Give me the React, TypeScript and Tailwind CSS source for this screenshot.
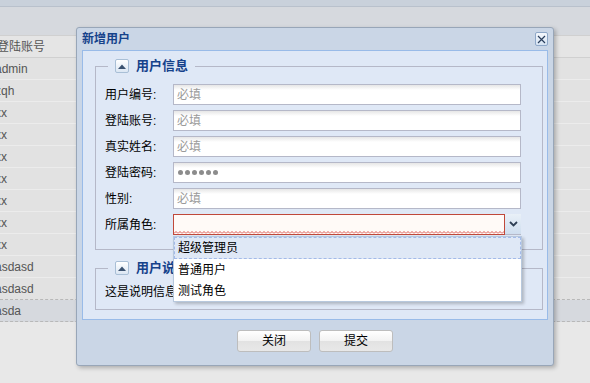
const rows = ["admin", "zqh", "xx", "xx", "xx", "xx", "xx", "xx", "xx", "asdasd", "asdasd", "asda"];

function CollapseTool() {
  return (
    <span className="flex h-[14px] w-[14px] items-center justify-center rounded-[2px] border border-[#a9bfd6] bg-[linear-gradient(to_bottom,#ffffff,#dbe6f3)]">
      <svg width="8" height="5" viewBox="0 0 8 5">
        <path d="M0 5 L4 0.5 L8 5 Z" fill="#3b5270" />
      </svg>
    </span>
  );
}

function Field({ label, children }: { label: string; children: React.ReactNode }) {
  return (
    <div className="flex h-[21px] items-center">
      <span className="w-[68px] text-[12px] leading-[16px] text-black">{label}</span>
      {children}
    </div>
  );
}

function TextInput({ placeholder }: { placeholder: string }) {
  return (
    <div className="flex h-[21px] w-[348px] items-center border border-[#b5b8c8] bg-[linear-gradient(to_bottom,#e6e6e6,#ffffff_5px)] pl-[3px] text-[12px] text-[#9a9a9a]">
      {placeholder}
    </div>
  );
}

export default function App() {
  return (
    <div className="relative h-[383px] w-[590px] overflow-hidden bg-[#e8e8e8] font-['Liberation_Sans','Noto_Sans_CJK_SC',sans-serif]">
      {/* masked grid behind the window */}
      <div className="flex flex-col">
        <div className="h-[7px] border-b border-[#b9c1cc] bg-[#c9d1db]" />
        <div className="h-[28px] bg-[#d6d9de]" />
        <div className="flex h-[23px] items-center border-y border-[#d0d0d0] bg-[#e5e5e5] text-[12px] text-[#555]">
          <span className="-ml-[3px]">登陆账号</span>
        </div>
        {rows.map((r, i) => {
          const selected = i === rows.length - 1;
          const beforeSelected = i === rows.length - 2;
          return (
            <div
              key={i}
              className={
                "flex h-[22px] items-center text-[12px] text-[#555] " +
                (selected
                  ? "border-b border-dashed border-[#b8b8b8] bg-[#d6d9de]"
                  : beforeSelected
                    ? "border-b border-dashed border-[#b8b8b8] bg-[#e2e2e2]"
                    : "border-b border-[#ececec] bg-[#e2e2e2]")
              }
            >
              <span className="-ml-[5px]">{r}</span>
            </div>
          );
        })}
      </div>

      {/* window */}
      <div className="absolute left-[76px] top-[27px] flex h-[339px] w-[478px] flex-col rounded-[3px] border border-[#98a6b8] bg-[#cad6e6] shadow-[2px_2px_4px_rgba(0,0,0,0.25)]">
        <div className="flex h-[22px] items-center justify-between px-[5px]">
          <span className="text-[12px] font-bold text-[#15428b]">新增用户</span>
          <span className="flex h-[14px] w-[13px] items-center justify-center rounded-[2px] border border-[#8fa8c8] bg-[linear-gradient(to_bottom,#f4f8fd,#d6e3f2)]">
            <svg width="9" height="9" viewBox="0 0 9 9">
              <path d="M1 1 L8 8 M8 1 L1 8" stroke="#2a3f5c" strokeWidth="1.2" />
            </svg>
          </span>
        </div>

        <div className="mx-[5px] h-[270px] border border-[#99bbe8] bg-[#dfe8f6] pl-[12px] pr-[4px] pt-[7px]">
          <fieldset className="border border-[#b5b8c8] pb-[14px] pl-[9px] pr-[20px] pt-[10px]">
            <legend className="ml-[3px] flex h-[16px] items-center gap-[7px] px-[7px]">
              <CollapseTool />
              <span className="text-[13px] font-bold leading-[16px] text-[#15428b]">用户信息</span>
            </legend>
            <div className="flex flex-col gap-[5px]">
              <Field label="用户编号:">
                <TextInput placeholder="必填" />
              </Field>
              <Field label="登陆账号:">
                <TextInput placeholder="必填" />
              </Field>
              <Field label="真实姓名:">
                <TextInput placeholder="必填" />
              </Field>
              <Field label="登陆密码:">
                <div className="flex h-[21px] w-[348px] items-center gap-[2px] border border-[#b5b8c8] bg-[linear-gradient(to_bottom,#e6e6e6,#ffffff_5px)] pl-[4px]">
                  {[0, 1, 2, 3, 4, 5].map((d) => (
                    <span key={d} className="h-[5px] w-[5px] rounded-full bg-[#8c8c8c]" />
                  ))}
                </div>
              </Field>
              <Field label="性别:">
                <TextInput placeholder="必填" />
              </Field>
              <Field label="所属角色:">
                <div className="flex h-[21px] w-[348px]">
                  <div className="flex flex-1 flex-col justify-end border border-[#c0483a] bg-[#fffaf7]">
                    <svg width="100%" height="3" className="block">
                      <defs>
                        <pattern id="zig" width="4" height="3" patternUnits="userSpaceOnUse">
                          <path d="M0 2.5 L2 0.5 L4 2.5" stroke="#d9534f" strokeWidth="1" fill="none" />
                        </pattern>
                      </defs>
                      <rect width="100%" height="3" fill="url(#zig)" />
                    </svg>
                  </div>
                  <div className="flex w-[16px] items-center justify-center border-b border-[#b5b8c8] bg-[linear-gradient(to_bottom,#e9f0f8,#cfdeef)]">
                    <svg width="9" height="6" viewBox="0 0 9 6">
                      <path d="M1 1 L4.5 4.5 L8 1" stroke="#2f3f55" strokeWidth="1.8" fill="none" />
                    </svg>
                  </div>
                </div>
              </Field>
            </div>
          </fieldset>

          <fieldset className="mt-[10px] border border-[#b5b8c8] pb-[8px] pl-[9px] pr-[20px] pt-[7px]">
            <legend className="ml-[3px] flex h-[16px] items-center gap-[7px] px-[7px]">
              <CollapseTool />
              <span className="text-[13px] font-bold leading-[16px] text-[#15428b]">用户说明</span>
            </legend>
            <div className="text-[12px] leading-[18px] text-black">这是说明信息</div>
          </fieldset>
        </div>

        <div className="flex flex-1 justify-center gap-[8px] pt-[10px]">
          <button className="flex h-[22px] w-[74px] items-center justify-center rounded-[3px] border border-[#bdbdbd] bg-[linear-gradient(to_bottom,#ffffff,#f2f2f2_50%,#e2e2e2_50%,#e8e8e8)] text-[12px] text-black">
            关闭
          </button>
          <button className="flex h-[22px] w-[74px] items-center justify-center rounded-[3px] border border-[#bdbdbd] bg-[linear-gradient(to_bottom,#ffffff,#f2f2f2_50%,#e2e2e2_50%,#e8e8e8)] text-[12px] text-black">
            提交
          </button>
        </div>
      </div>

      {/* combo dropdown list */}
      <div className="absolute left-[173px] top-[236px] flex w-[349px] flex-col border border-[#b7c8dd] bg-white text-[12px] text-black shadow-[2px_2px_3px_rgba(0,0,0,0.22)]">
        <div className="flex h-[22px] items-center border border-dashed border-[#a3bae9] bg-[#dfe8f6] pl-[3px]">超级管理员</div>
        <div className="flex h-[21px] items-center pl-[4px]">普通用户</div>
        <div className="flex h-[21px] items-center pl-[4px]">测试角色</div>
      </div>
    </div>
  );
}
